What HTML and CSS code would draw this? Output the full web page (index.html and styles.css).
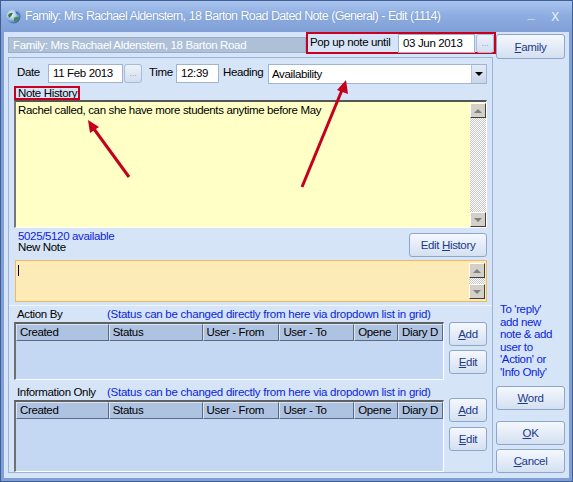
FILE: index.html
```html
<!DOCTYPE html>
<html>
<head>
<meta charset="utf-8">
<link rel="stylesheet" href="styles.css">
</head>
<body>
<div class="window">
  <div class="titlebar">
    <svg class="app-icon" width="15" height="15" viewBox="0 0 15 15">
      <defs>
        <radialGradient id="g1" cx="0.35" cy="0.35" r="0.7">
          <stop offset="0" stop-color="#ffffff"/>
          <stop offset="0.5" stop-color="#9fc3e8"/>
          <stop offset="1" stop-color="#2f5fa8"/>
        </radialGradient>
      </defs>
      <circle cx="7.5" cy="7.5" r="7" fill="url(#g1)"/>
      <path d="M2 6 Q4 3 7 4 Q6 7 3 9 Z" fill="#3a7a3a"/>
      <path d="M8 9 Q11 7 13 9 Q11 13 8 12 Z" fill="#4a8a3a"/>
      <path d="M9 2 Q12 3 13 6 Q10 5 9 2 Z" fill="#2d5f9e"/>
    </svg>
    <span class="title">Family: Mrs Rachael Aldenstern, 18 Barton Road Dated Note (General) - Edit (1114)</span>
    <span class="tb-btn tb-min">_</span>
    <span class="tb-btn tb-close">X</span>
  </div>
  <div class="client">
    <div class="left">
      <div class="head-row">
        <div class="family-bar">Family: Mrs Rachael Aldenstern, 18 Barton Road</div>
        <div class="popup-box">
          <span class="popup-label">Pop up note until</span>
          <div class="field popup-date">03 Jun 2013</div>
          <div class="dots-btn">...</div>
        </div>
      </div>
      <div class="panel">
        <div class="date-row">
          <span class="lbl lbl-date">Date</span>
          <div class="field f-date">11 Feb 2013</div>
          <div class="dots-btn dots-date">...</div>
          <span class="lbl lbl-time">Time</span>
          <div class="field f-time">12:39</div>
          <span class="lbl lbl-heading">Heading</span>
          <div class="field f-select">
            <span class="sel-text">Availability</span>
            <span class="sel-btn"><span class="tri-down-black"></span></span>
          </div>
        </div>
        <div class="nh-label">Note History</div>
        <div class="history">
          <div class="history-text">Rachel called, can she have more students anytime before May</div>
          <div class="vscroll">
            <div class="sb-btn"><span class="tri-up"></span></div>
            <div class="sb-track"></div>
            <div class="sb-btn"><span class="tri-down"></span></div>
          </div>
        </div>
        <div class="avail-row">
          <div class="avail-text">
            <div class="avail">5025/5120 available</div>
            <div>New Note</div>
          </div>
          <div class="btn btn-hist"><span>Edit <u>H</u>istory</span></div>
        </div>
        <div class="newnote">
          <div class="newnote-text"><span class="caret"></span></div>
          <div class="vscroll vscroll-small">
            <div class="sb-btn"><span class="tri-up"></span></div>
            <div class="sb-track"></div>
            <div class="sb-btn"><span class="tri-down"></span></div>
          </div>
        </div>
        <div class="sep"></div>
        <div class="grid-section">
          <div class="grid-label-row">
            <span class="grid-title">Action By</span>
            <span class="grid-hint">(Status can be changed directly from here via dropdown list in grid)</span>
          </div>
          <div class="grid-row">
            <div class="grid grid-action">
              <div class="grid-head">
                <span class="gh c1">Created</span>
                <span class="gh c2">Status</span>
                <span class="gh c3">User - From</span>
                <span class="gh c4">User - To</span>
                <span class="gh c5">Opene</span>
                <span class="gh c6">Diary D</span>
              </div>
            </div>
            <div class="grid-btns">
              <div class="btn btn-small"><span><u>A</u>dd</span></div>
              <div class="btn btn-small"><span><u>E</u>dit</span></div>
            </div>
          </div>
        </div>
        <div class="grid-section grid-section-2">
          <div class="grid-label-row">
            <span class="grid-title">Information Only</span>
            <span class="grid-hint">(Status can be changed directly from here via dropdown list in grid)</span>
          </div>
          <div class="grid-row">
            <div class="grid grid-info">
              <div class="grid-head">
                <span class="gh c1">Created</span>
                <span class="gh c2">Status</span>
                <span class="gh c3">User - From</span>
                <span class="gh c4">User - To</span>
                <span class="gh c5">Opene</span>
                <span class="gh c6">Diary D</span>
              </div>
            </div>
            <div class="grid-btns grid-btns-2">
              <div class="btn btn-small"><span><u>A</u>dd</span></div>
              <div class="btn btn-small"><span><u>E</u>dit</span></div>
            </div>
          </div>
        </div>
      </div>
    </div>
    <div class="right">
      <div class="btn btn-side btn-family"><span><u>F</u>amily</span></div>
      <div class="help">To 'reply'<br>add new<br>note &amp; add<br>user to<br>'Action' or<br>'Info Only'</div>
      <div class="btn btn-side btn-word"><span><u>W</u>ord</span></div>
      <div class="btn btn-side btn-ok"><span><u>O</u>K</span></div>
      <div class="btn btn-side btn-cancel"><span><u>C</u>ancel</span></div>
    </div>
  </div>
  <svg class="arrows" width="573" height="482" viewBox="0 0 573 482">
    <line x1="129" y1="177" x2="94" y2="129" stroke="#c4001c" stroke-width="3"/>
    <polygon points="88,120 99,127 90,133" fill="#c4001c"/>
    <line x1="302" y1="187" x2="342" y2="90" stroke="#c4001c" stroke-width="3"/>
    <polygon points="346,80 348,94 337,90" fill="#c4001c"/>
  </svg>
</div>
</body>
</html>
```

FILE: styles.css
```css
* { box-sizing: border-box; }
html, body { margin: 0; padding: 0; }
body {
  font-family: "Liberation Sans", Arial, sans-serif;
  font-size: 11.5px;
  letter-spacing: -0.35px;
  color: #000;
  background: #fff;
}
.window {
  position: relative;
  width: 573px;
  height: 482px;
  background: #7f9fd6;
  border: 1px solid #3f5f95;
  display: flex;
  flex-direction: column;
  overflow: hidden;
}
.titlebar {
  height: 31px;
  flex: none;
  display: flex;
  align-items: center;
  padding-left: 5px;
  background: linear-gradient(#a9c4ee 0%, #8eaee2 45%, #7f9fd6 100%);
  color: #fff;
}
.app-icon { flex: none; margin-top: -1px; }
.title {
  margin-left: 4px;
  font-size: 12.5px;
  letter-spacing: -0.68px;
  word-spacing: 0.5px;
  text-shadow: 0 0 1px #6080b0;
  flex: 1;
  white-space: nowrap;
  margin-top: -1px;
}
.tb-btn {
  color: #e8eef8;
  font-size: 13px;
  width: 20px;
  text-align: center;
}
.tb-min { margin-right: 4px; font-weight: bold; position: relative; top: -3px; }
.tb-close { margin-right: 7px; font-family: "DejaVu Sans", sans-serif; font-size: 12px; }

.client {
  flex: 1;
  margin: 0 3px 3px 3px;
  background: #d6e4f8;
  display: flex;
  padding-left: 4px;
}
.left {
  width: 488px;
  display: flex;
  flex-direction: column;
}
.head-row {
  height: 25px;
  display: flex;
  align-items: flex-start;
}
.family-bar {
  margin-top: 5px;
  width: 298px;
  height: 16px;
  background: #aebfd8;
  border: 1px solid #9aaecb;
  color: #fff;
  padding-left: 4px;
  line-height: 14px;
}
.popup-box {
  width: 190px;
  height: 22px;
  border: 2px solid #c8001e;
  display: flex;
  align-items: flex-start;
  background: #d6e4f8;
}
.popup-label {
  width: 90px;
  padding-left: 2px;
  line-height: 16px;
  white-space: nowrap;
}
.field {
  background: #fff;
  border: 1px solid #9fb4d4;
  height: 19px;
  line-height: 17px;
  padding-left: 4px;
  white-space: nowrap;
}
.popup-date { width: 77px; height: 19px; }
.dots-btn {
  width: 18px;
  height: 19px;
  margin-left: 1px;
  border: 1px solid #a8bad6;
  border-radius: 3px;
  background: linear-gradient(#eef3fa, #d3def0);
  color: #8fa0bb;
  font-size: 9px;
  letter-spacing: 0;
  text-align: center;
  line-height: 16px;
}

.panel {
  width: 485px;
  height: 416px;
  border: 1px solid #9cb3d8;
  padding: 6px 5px 0 5px;
  display: flex;
  flex-direction: column;
}
.date-row {
  height: 20px;
  display: flex;
  align-items: flex-start;
}
.lbl { line-height: 17px; white-space: nowrap; }
.lbl-date { width: 34px; padding-left: 3px; }
.f-date { width: 75px; }
.dots-date { margin-left: 1px; }
.lbl-time { width: 34px; padding-left: 7px; }
.f-time { width: 43px; }
.lbl-heading { width: 49px; padding-left: 4px; }
.f-select {
  width: 219px;
  height: 20px;
  display: flex;
  padding-left: 0;
}
.sel-text { flex: 1; padding-left: 3px; line-height: 18px; }
.sel-btn {
  width: 15px;
  height: 18px;
  background: linear-gradient(#e4ebf6, #c9d6ea);
  border-left: 1px solid #b5c5de;
  display: flex;
  align-items: center;
  justify-content: center;
}
.tri-down-black {
  width: 0; height: 0;
  border-left: 4px solid transparent;
  border-right: 4px solid transparent;
  border-top: 4px solid #000;
}
.nh-label {
  margin-top: 2px;
  width: 66px;
  height: 14px;
  border: 2px solid #c8001e;
  line-height: 10px;
  padding-left: 2px;
  white-space: nowrap;
  overflow: hidden;
}
.history {
  height: 128px;
  display: flex;
  background: #ffffc6;
  border-top: 2px solid #555;
  border-left: 2px solid #777;
  border-right: 1px solid #fff;
  border-bottom: 1px solid #fff;
}
.history-text {
  flex: 1;
  padding: 1px 2px;
  line-height: 14px;
}
.vscroll {
  width: 16px;
  display: flex;
  flex-direction: column;
  margin: 1px 0 0 0;
}
.sb-btn {
  height: 15px;
  background: #d4d0c8;
  border-top: 1px solid #fff;
  border-left: 1px solid #fff;
  border-right: 1px solid #404040;
  border-bottom: 1px solid #404040;
  display: flex;
  align-items: center;
  justify-content: center;
}
.sb-track {
  flex: 1;
  background-color: #fff;
  background-image: repeating-conic-gradient(#c8c8c8 0% 25%, #ffffff 0% 50%);
  background-size: 2px 2px;
}
.tri-up {
  width: 0; height: 0;
  border-left: 4px solid transparent;
  border-right: 4px solid transparent;
  border-bottom: 4px solid #808080;
}
.tri-down {
  width: 0; height: 0;
  border-left: 4px solid transparent;
  border-right: 4px solid transparent;
  border-top: 4px solid #808080;
}
.avail-row {
  height: 32px;
  display: flex;
  justify-content: space-between;
  align-items: flex-start;
  padding-top: 5px;
}
.avail-text {
  margin-top: -2px;
  padding-left: 4px;
  line-height: 11px;
}
.avail { color: #0a1ee0; }
.btn {
  border: 1px solid #8ea6cc;
  border-radius: 3px;
  background: linear-gradient(#f5f8fd 0%, #e4ecf7 50%, #d4e0f1 100%);
  color: #1c3a8a;
  display: flex;
  align-items: center;
  justify-content: center;
  white-space: nowrap;
}
.btn-hist { width: 78px; height: 24px; }
.newnote {
  height: 42px;
  margin-left: 1px;
  display: flex;
  background: #fdebb7;
  border: 1px solid #f3b665;
}
.newnote-text { flex: 1; padding: 4px 2px; }
.caret {
  display: block;
  width: 1px;
  height: 11px;
  background: #000;
}
.vscroll-small { margin: 2px 1px 2px 0; }
.sep {
  margin-top: 3px;
  height: 1px;
  margin-left: -5px;
  margin-right: -5px;
  background: #f2f6fc;
}
.grid-section { display: flex; flex-direction: column; }
.grid-label-row {
  height: 16px;
  display: flex;
  align-items: center;
  white-space: nowrap;
}
.grid-title { width: 93px; padding-left: 3px; }
.grid-hint { color: #0a1ee0; letter-spacing: -0.25px; }
.grid-row { display: flex; }
.grid {
  width: 430px;
  background: #c4d8f4;
  border-top: 2px solid #606060;
  border-left: 2px solid #707070;
  border-right: 1px solid #fff;
  border-bottom: 1px solid #fff;
}
.grid-action { height: 58px; }
.grid-info { height: 72px; }
.grid-head {
  display: flex;
  height: 17px;
}
.gh {
  background: #aec3e2;
  border-right: 1px solid #5a6a80;
  border-bottom: 1px solid #5a6a80;
  border-left: 1px solid #dbe6f5;
  border-top: 1px solid #dbe6f5;
  padding-left: 3px;
  line-height: 14px;
  white-space: nowrap;
  overflow: hidden;
}
.c1 { width: 93px; }
.c2 { width: 94px; }
.c3 { width: 77px; }
.c4 { width: 75px; }
.c5 { width: 44px; }
.c6 { width: 45px; }
.grid-btns {
  margin-left: 5px;
  display: flex;
  flex-direction: column;
  gap: 4px;
}
.grid-btns-2 { margin-top: -2px; gap: 5px; }
.btn-small { width: 38px; height: 24px; }
.grid-section-2 { margin-top: 4px; }

.right {
  width: 69px;
  display: flex;
  flex-direction: column;
}
.btn-side { width: 69px; height: 25px; }
.btn-family { margin-top: 2px; }
.help {
  margin-top: 244px;
  padding-left: 4px;
  color: #0a1ee0;
  line-height: 12.6px;
}
.btn-word { margin-top: 7px; height: 24px; }
.btn-ok { margin-top: 11px; height: 24px; }
.btn-cancel { margin-top: 4px; height: 24px; }

.arrows {
  position: absolute;
  left: -1px;
  top: -1px;
  pointer-events: none;
}
```
